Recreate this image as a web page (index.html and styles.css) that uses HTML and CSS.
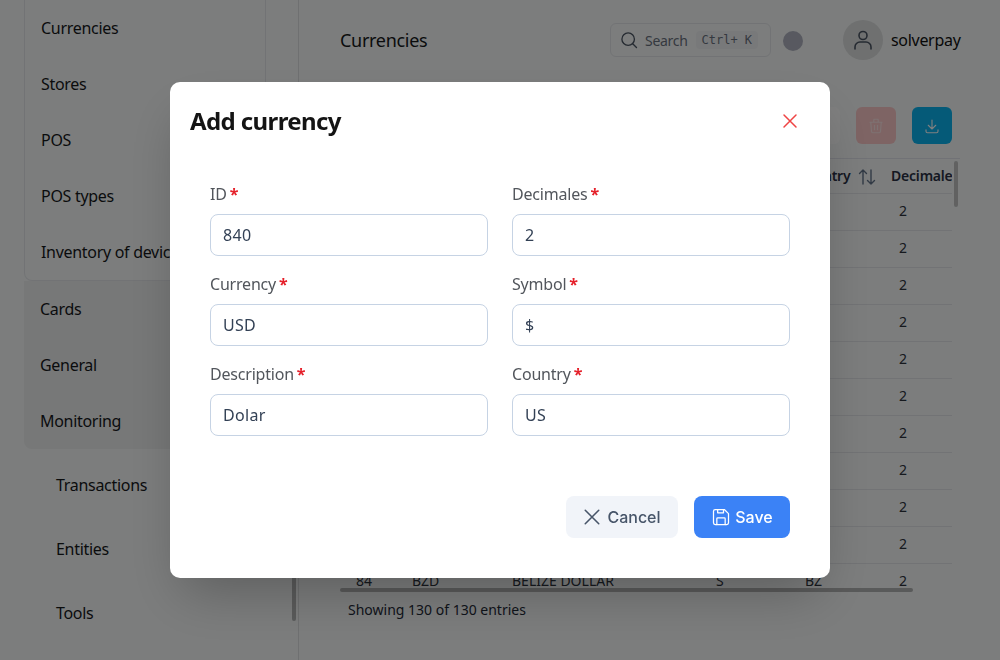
FILE: index.html
```html
<!DOCTYPE html>
<html lang="en">
<head>
    <meta charset="UTF-8">
    <meta name="viewport" content="width=device-width, initial-scale=1.0">
    <title>Currencies</title>
    <link rel="stylesheet" href="styles.css">
</head>
<body>
    <div class="app">
        <aside class="sidebar">
            <div class="submenu">
                <a class="submenu-item">Currencies</a>
                <a class="submenu-item">Stores</a>
                <a class="submenu-item">POS</a>
                <a class="submenu-item">POS types</a>
                <a class="submenu-item">Inventory of devices</a>
            </div>
            <div class="menu-group">
                <a class="menu-item">Cards</a>
                <a class="menu-item">General</a>
                <a class="menu-item">Monitoring</a>
            </div>
            <div class="menu-children">
                <a class="child-item">Transactions</a>
                <a class="child-item">Entities</a>
                <a class="child-item">Tools</a>
            </div>
            <div class="sidebar-thumb"></div>
        </aside>

        <main class="content">
            <header class="topbar">
                <div class="page-title">Currencies</div>
                <div class="search">
                    <svg class="search-icon" viewBox="0 0 24 24" fill="none" stroke="currentColor" stroke-width="1.6" stroke-linecap="round"><circle cx="11" cy="11" r="7.5"/><path d="M16.5 16.5L21 21"/></svg>
                    <span>Search</span>
                    <kbd class="shortcut">Ctrl+ K</kbd>
                </div>
                <div class="status-dot"></div>
                <div class="avatar">
                    <svg viewBox="0 0 24 24" fill="none" stroke="currentColor" stroke-width="1.6" stroke-linecap="round"><circle cx="12" cy="7.5" r="4"/><path d="M4 21v-2a5 5 0 0 1 5-5h6a5 5 0 0 1 5 5v2"/></svg>
                </div>
                <div class="username">solverpay</div>
            </header>

            <div class="actions">
                <button class="action action-grey"></button>
                <button class="action action-red">
                    <svg viewBox="0 0 24 24" fill="none" stroke="currentColor" stroke-width="1.5" stroke-linecap="round" stroke-linejoin="round"><path d="M4 7h16M10 11v6M14 11v6M5 7l1 12a2 2 0 0 0 2 2h8a2 2 0 0 0 2-2l1-12M9 7V4a1 1 0 0 1 1-1h4a1 1 0 0 1 1 1v3"/></svg>
                </button>
                <button class="action action-blue">
                    <svg viewBox="0 0 24 24" fill="none" stroke="currentColor" stroke-width="1.5" stroke-linecap="round" stroke-linejoin="round"><path d="M4 17v2a2 2 0 0 0 2 2h12a2 2 0 0 0 2-2v-2M7 11l5 5 5-5M12 4v12"/></svg>
                </button>
            </div>

            <div class="table-wrap">
                <table class="table">
                    <colgroup>
                        <col class="col-id"><col class="col-code"><col class="col-desc"><col class="col-symbol"><col class="col-country"><col class="col-dec">
                    </colgroup>
                    <thead>
                        <tr>
                            <th>ID</th>
                            <th>Currency</th>
                            <th>Description</th>
                            <th>Symbol</th>
                            <th class="th-sort">Country
                                <svg class="sort-icon" viewBox="0 0 18 18" fill="none" stroke="currentColor" stroke-width="1.4" stroke-linecap="round" stroke-linejoin="round"><path d="M5 16V2M1.5 5.5L5 2l3.5 3.5M13 2v14M9.5 12.5L13 16l3.5-3.5"/></svg>
                            </th>
                            <th class="th-dec">Decimales</th>
                        </tr>
                    </thead>
                    <tbody>
                        <tr><td>971</td><td>AFN</td><td>AFGHANI</td><td>؋</td><td>AF</td><td>2</td></tr>
                        <tr><td>8</td><td>ALL</td><td>LEK</td><td>L</td><td>AL</td><td>2</td></tr>
                        <tr><td>12</td><td>DZD</td><td>ALGERIAN DINAR</td><td>د</td><td>DZ</td><td>2</td></tr>
                        <tr><td>973</td><td>AOA</td><td>KWANZA</td><td>Kz</td><td>AO</td><td>2</td></tr>
                        <tr><td>32</td><td>ARS</td><td>ARGENTINE PESO</td><td>$</td><td>AR</td><td>2</td></tr>
                        <tr><td>51</td><td>AMD</td><td>ARMENIAN DRAM</td><td>֏</td><td>AM</td><td>2</td></tr>
                        <tr><td>36</td><td>AUD</td><td>AUSTRALIAN DOLLAR</td><td>$</td><td>AU</td><td>2</td></tr>
                        <tr><td>44</td><td>BSD</td><td>BAHAMIAN DOLLAR</td><td>$</td><td>BS</td><td>2</td></tr>
                        <tr><td>50</td><td>BDT</td><td>TAKA</td><td>৳</td><td>BD</td><td>2</td></tr>
                        <tr><td>52</td><td>BBD</td><td>BARBADOS DOLLAR</td><td>$</td><td>BB</td><td>2</td></tr>
                        <tr><td>84</td><td>BZD</td><td>BELIZE DOLLAR</td><td>S</td><td>BZ</td><td>2</td></tr>
                    </tbody>
                </table>
                <div class="thumb-y"></div>
                <div class="thumb-x"></div>
            </div>
            <div class="entries">Showing 130 of 130 entries</div>
        </main>
    </div>

    <div class="overlay">
        <div class="modal">
            <div class="modal-header">
                <h2>Add currency</h2>
                <svg class="modal-close" viewBox="0 0 16 16" fill="none" stroke="currentColor" stroke-width="1.5" stroke-linecap="round"><path d="M2 2l12 12M14 2L2 14"/></svg>
            </div>
            <form class="modal-form">
                <div class="field">
                    <label for="id">ID <span class="req">*</span></label>
                    <input type="text" id="id" value="840">
                </div>
                <div class="field">
                    <label for="decimals">Decimales <span class="req">*</span></label>
                    <input type="text" id="decimals" value="2">
                </div>
                <div class="field">
                    <label for="currency">Currency <span class="req">*</span></label>
                    <input type="text" id="currency" value="USD">
                </div>
                <div class="field">
                    <label for="symbol">Symbol <span class="req">*</span></label>
                    <input type="text" id="symbol" value="$">
                </div>
                <div class="field">
                    <label for="description">Description <span class="req">*</span></label>
                    <input type="text" id="description" value="Dolar">
                </div>
                <div class="field">
                    <label for="country">Country <span class="req">*</span></label>
                    <input type="text" id="country" value="US">
                </div>
            </form>
            <div class="modal-footer">
                <button type="button" class="btn btn-cancel">
                    <svg viewBox="0 0 16 16" fill="none" stroke="currentColor" stroke-width="1.4" stroke-linecap="round"><path d="M2 2l12 12M14 2L2 14"/></svg>
                    Cancel
                </button>
                <button type="button" class="btn btn-save">
                    <svg viewBox="0 0 24 24" fill="none" stroke="currentColor" stroke-width="1.5" stroke-linecap="round" stroke-linejoin="round"><path d="M6 3h10l5 5v11a2 2 0 0 1-2 2H5a2 2 0 0 1-2-2V5a2 2 0 0 1 2-2z"/><path d="M7 21v-7a1 1 0 0 1 1-1h8a1 1 0 0 1 1 1v7M8 3v4h7V3"/></svg>
                    Save
                </button>
            </div>
        </div>
    </div>
</body>
</html>
```

FILE: styles.css
```css
* {
    box-sizing: border-box;
}
body {
    font-family: "Noto Sans", Arial, sans-serif;
    font-size: 16px;
    letter-spacing: -0.3px;
    background: #f8fbfa;
    color: #16181b;
    height: 660px;
    margin: 0;
    overflow: hidden;
}
.app {
    display: flex;
    height: 660px;
}

/* sidebar */
.sidebar {
    position: relative;
    width: 299px;
    flex-shrink: 0;
    border-right: 1px solid #dfe1e2;
    padding-left: 24px;
}
.submenu {
    width: 242px;
    height: 281px;
    border: 1px solid #e5e7eb;
    border-top: none;
    border-radius: 0 0 8px 8px;
}
.submenu-item {
    display: flex;
    align-items: center;
    height: 56px;
    padding-left: 16px;
    white-space: nowrap;
}
.menu-group {
    width: 242px;
    height: 168px;
    background: #eef0f0;
    border-radius: 0 0 8px 8px;
}
.menu-item {
    display: flex;
    align-items: center;
    height: 56px;
    padding-left: 16px;
}
.menu-children {
    padding-top: 4px;
}
.child-item {
    display: flex;
    align-items: center;
    height: 64px;
    padding-left: 32px;
}
.sidebar-thumb {
    position: absolute;
    left: 292px;
    top: 560px;
    width: 4px;
    height: 61px;
    border-radius: 2px;
    background: #b5b6b6;
}

/* main */
.content {
    flex: 1;
    min-width: 0;
    padding-left: 41px;
}
.topbar {
    display: flex;
    align-items: center;
    height: 80px;
}
.page-title {
    font-size: 18px;
    width: 270px;
}
.search {
    display: flex;
    align-items: center;
    width: 161px;
    height: 34px;
    padding-left: 8px;
    border: 1px solid #e5e7eb;
    border-radius: 6px;
    font-size: 14px;
    color: #6b7280;
}
.search-icon {
    width: 20px;
    height: 20px;
    margin-right: 6px;
    color: #4b5563;
}
.shortcut {
    margin-left: 8px;
    padding: 2px 6px;
    border-radius: 4px;
    background: #f1f3f5;
    font-family: "DejaVu Sans Mono", monospace;
    font-size: 12px;
    letter-spacing: 0;
}
.status-dot {
    width: 20px;
    height: 20px;
    margin-left: 12px;
    margin-top: 2px;
    border-radius: 50%;
    background: #b0b3c1;
}
.avatar {
    display: flex;
    align-items: center;
    justify-content: center;
    width: 40px;
    height: 40px;
    margin-left: 40px;
    border-radius: 50%;
    background: #dee0e1;
    color: #4b5563;
}
.avatar svg {
    width: 24px;
    height: 24px;
}
.username {
    margin-left: 8px;
    color: #111;
}
.actions {
    display: flex;
    justify-content: flex-end;
    gap: 16px;
    width: 612px;
    height: 37px;
    margin-top: 27px;
}
.action {
    display: flex;
    align-items: center;
    justify-content: center;
    width: 40px;
    height: 37px;
    padding: 0;
    border: none;
    border-radius: 6px;
    color: #fff;
}
.action svg {
    width: 18px;
    height: 18px;
}
.action-grey {
    background: #ffffff;
}
.action-red {
    background: #fdc9c9;
    color: #fde4e4;
}
.action-blue {
    background: #0ab4f0;
}

/* table */
.table-wrap {
    position: relative;
    width: 620px;
    height: 434px;
    margin-top: 14px;
    border-top: 1px solid #e2e4ec;
    overflow: hidden;
}
.table {
    width: 612px;
    table-layout: fixed;
    border-collapse: collapse;
    font-size: 14px;
    letter-spacing: 0;
}
.col-id { width: 56px; }
.col-code { width: 100px; }
.col-desc { width: 204px; }
.col-symbol { width: 89px; }
.col-country { width: 94px; }
.col-dec { width: 69px; }
.table th {
    height: 34px;
    padding-left: 16px;
    text-align: left;
    font-weight: 600;
    letter-spacing: -0.2px;
    color: #2b3145;
    white-space: nowrap;
    border-bottom: 1px solid #e5e7eb;
}
.table .th-sort {
    padding-left: 8px;
}
.table .th-dec {
    padding-left: 8px;
    overflow: hidden;
}
.sort-icon {
    width: 18px;
    height: 18px;
    margin-left: 4px;
    vertical-align: -5px;
    color: #64748b;
}
.table td {
    height: 37px;
    padding: 0 0 2px 16px;
    color: #2d333d;
    border-bottom: 1px solid #e5e7eb;
}
.thumb-y {
    position: absolute;
    left: 614px;
    top: 2px;
    width: 4px;
    height: 46px;
    border-radius: 2px;
    background: #c2c3c3;
}
.thumb-x {
    position: absolute;
    left: 0;
    top: 429px;
    width: 573px;
    height: 4px;
    border-radius: 2px;
    background: #b3b4b4;
}
.entries {
    margin-top: 8px;
    padding-left: 8px;
    font-size: 14px;
    letter-spacing: 0;
    color: #1f2937;
}

/* modal */
.overlay {
    position: fixed;
    top: 0;
    left: 0;
    right: 0;
    bottom: 0;
    display: flex;
    align-items: center;
    justify-content: center;
    background: rgba(0, 0, 0, 0.5);
}
.modal {
    width: 660px;
    height: 496px;
    background: #ffffff;
    border-radius: 10px;
    box-shadow: 0 25px 50px -12px rgba(0, 0, 0, 0.25);
}
.modal-header {
    display: flex;
    align-items: center;
    justify-content: space-between;
    height: 78px;
    padding: 0 32px 0 20px;
}
.modal-header h2 {
    margin: 0 0 2px;
    font-size: 24px;
    font-weight: 700;
    letter-spacing: -0.6px;
    color: #141414;
}
.modal-close {
    width: 16px;
    height: 16px;
    color: #ef4444;
}
.modal-form {
    display: grid;
    grid-template-columns: 278px 278px;
    gap: 16px 24px;
    padding: 22px 40px 0;
}
.field label {
    display: block;
    height: 24px;
    margin-bottom: 8px;
    line-height: 24px;
    letter-spacing: -0.2px;
    word-spacing: -1px;
    color: #52565c;
}
.req {
    color: #e5202a;
    font-weight: 700;
}
.field input {
    display: block;
    width: 100%;
    height: 42px;
    padding: 0 12px;
    border: 1px solid #c6d3e4;
    border-radius: 8px;
    font-family: inherit;
    font-size: 16px;
    letter-spacing: 0.3px;
    color: #334155;
}
.modal-footer {
    display: flex;
    justify-content: flex-end;
    gap: 16px;
    padding: 60px 40px 0;
}
.btn {
    display: flex;
    align-items: center;
    justify-content: center;
    gap: 6px;
    height: 42px;
    padding: 0;
    border: none;
    border-radius: 8px;
    font-family: Inter, sans-serif;
    font-size: 16px;
    font-weight: 500;
    letter-spacing: 0;
}
.btn svg {
    width: 18px;
    height: 18px;
}
.btn-save {
    gap: 4px;
}
.btn-save svg {
    width: 20px;
    height: 20px;
}
.btn-cancel {
    width: 112px;
    background: #f1f4f9;
    color: #475569;
}
.btn-save {
    width: 96px;
    background: #3b82f6;
    color: #ffffff;
}
```
